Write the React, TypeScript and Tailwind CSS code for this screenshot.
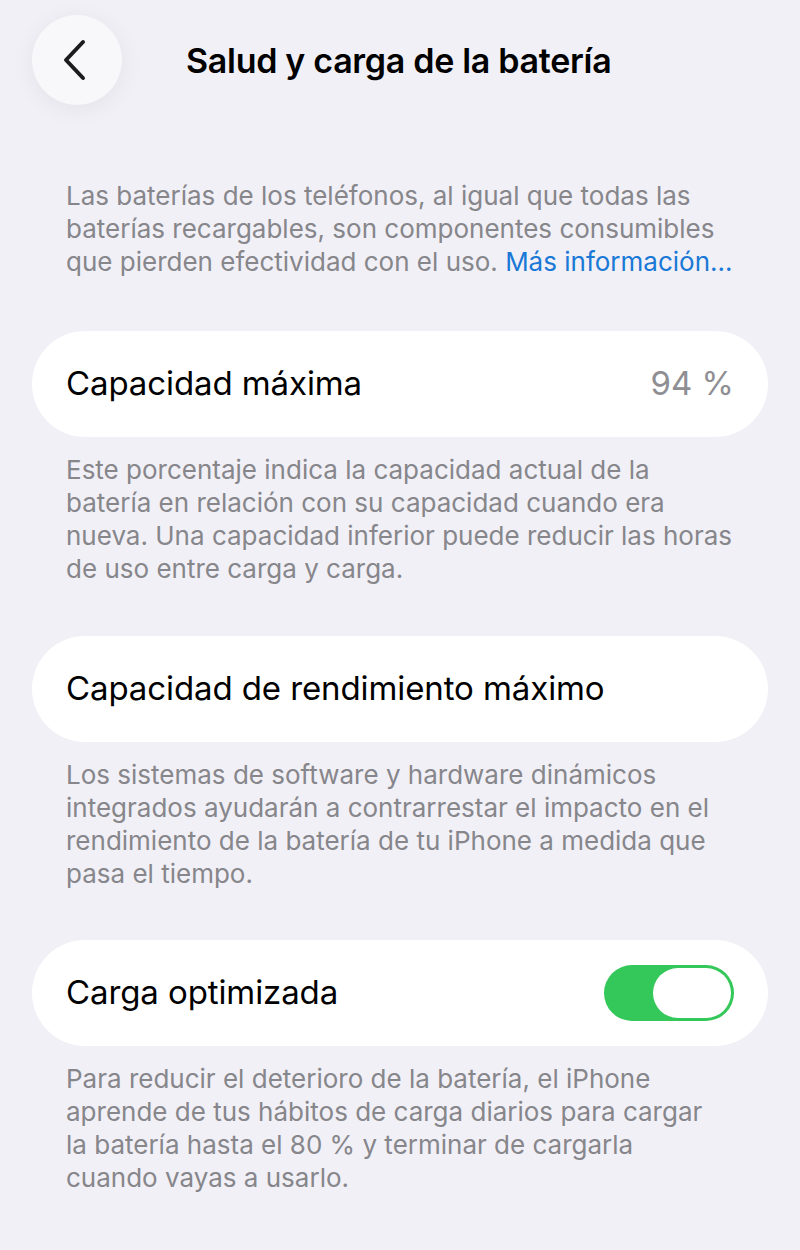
import React from "react";

const font = { fontFamily: "Inter, 'Noto Sans', sans-serif" };

const Note: React.FC<{ lines: React.ReactNode[] }> = ({ lines }) => (
    <div className="px-[66px] text-[26px] leading-[33px] text-[#86868b]">
        {lines.map((l, i) => (
            <div key={i} className="whitespace-nowrap">{l}</div>
        ))}
    </div>
);

const Card: React.FC<{ children: React.ReactNode }> = ({ children }) => (
    <div className="mx-[32px] h-[106px] rounded-full bg-white flex items-center justify-between pl-[34px] pr-[34px]">
        {children}
    </div>
);

const Toggle = () => (
    <div className="w-[130px] h-[56px] rounded-full bg-[#34c759] flex items-center justify-end p-[3px]">
        <div className="w-[78px] h-[50px] rounded-full bg-white" />
    </div>
);

export default function App() {
    return (
        <div className="w-[800px] h-[1250px] bg-[#f1f0f6] text-black" style={font}>
            <div className="flex items-center pt-[15px]">
                <button className="ml-[32px] w-[90px] h-[90px] rounded-full bg-[#f8f8fb] shadow-[0_4px_24px_rgba(0,0,0,0.06)] flex items-center justify-center">
                    <svg width="28" height="44" viewBox="0 0 28 44" fill="none" className="-ml-[4px]">
                        <path d="M22 4 L5 22 L22 40" stroke="#1c1c1e" strokeWidth="4" strokeLinecap="round" strokeLinejoin="round" />
                    </svg>
                </button>
                <h1 className="ml-[64px] text-[34px] font-semibold tracking-[-0.3px]">Salud y carga de la batería</h1>
            </div>

            <div className="mt-[74px]">
                <Note
                    lines={[
                        "Las baterías de los teléfonos, al igual que todas las",
                        "baterías recargables, son componentes consumibles",
                        <>que pierden efectividad con el uso. <span className="text-[#1a78d6]">Más información…</span></>,
                    ]}
                />
            </div>

            <div className="mt-[53px]">
                <Card>
                    <span className="text-[33px] tracking-[-0.1px]">Capacidad máxima</span>
                    <span className="text-[33px] text-[#8e8e93]">94 %</span>
                </Card>
            </div>
            <div className="mt-[16px]">
                <Note
                    lines={[
                        "Este porcentaje indica la capacidad actual de la",
                        "batería en relación con su capacidad cuando era",
                        "nueva. Una capacidad inferior puede reducir las horas",
                        "de uso entre carga y carga.",
                    ]}
                />
            </div>

            <div className="mt-[51px]">
                <Card>
                    <span className="text-[33px] tracking-[-0.1px]">Capacidad de rendimiento máximo</span>
                </Card>
            </div>
            <div className="mt-[16px]">
                <Note
                    lines={[
                        "Los sistemas de software y hardware dinámicos",
                        "integrados ayudarán a contrarrestar el impacto en el",
                        "rendimiento de la batería de tu iPhone a medida que",
                        "pasa el tiempo.",
                    ]}
                />
            </div>

            <div className="mt-[50px]">
                <Card>
                    <span className="text-[33px] tracking-[-0.1px]">Carga optimizada</span>
                    <Toggle />
                </Card>
            </div>
            <div className="mt-[16px]">
                <Note
                    lines={[
                        "Para reducir el deterioro de la batería, el iPhone",
                        "aprende de tus hábitos de carga diarios para cargar",
                        "la batería hasta el 80 % y terminar de cargarla",
                        "cuando vayas a usarlo.",
                    ]}
                />
            </div>
        </div>
    );
}
